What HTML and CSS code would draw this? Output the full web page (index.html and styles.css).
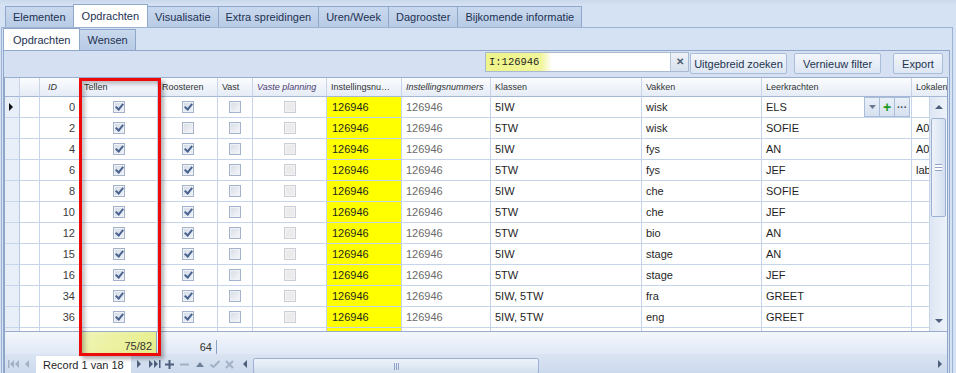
FILE: index.html
```html
<!DOCTYPE html>
<html lang="nl">

<head>
    <meta charset="UTF-8">
    <meta name="viewport" content="width=device-width, initial-scale=1.0">
    <title>Opdrachten</title>
    <link rel="stylesheet" href="styles.css">
</head>

<body>
    <!-- hoofdtabs -->
    <div class="tabs tabs-main">
        <div class="tab">Elementen</div>
        <div class="tab active">Opdrachten</div>
        <div class="tab">Visualisatie</div>
        <div class="tab">Extra spreidingen</div>
        <div class="tab">Uren/Week</div>
        <div class="tab">Dagrooster</div>
        <div class="tab">Bijkomende informatie</div>
    </div>

    <div class="tabpage">
        <!-- subtabs -->
        <div class="tabs tabs-sub">
            <div class="tab active">Opdrachten</div>
            <div class="tab">Wensen</div>
        </div>

        <div class="panel">
            <!-- zoekbalk -->
            <div class="toolbar">
                <div class="search">
                    <input type="text" value="I:126946">
                    <span class="clear">&#x2715;</span>
                </div>
                <button class="btn btn-wide">Uitgebreid zoeken</button>
                <button class="btn btn-filter">Vernieuw filter</button>
                <button class="btn btn-export">Export</button>
            </div>

            <!-- grid -->
            <div class="grid">
                <div class="head">
                    <div class="row row-head">
                        <div class="c ind"></div>
                        <div class="c"></div>
                        <div class="c it">ID</div>
                        <div class="c">Tellen</div>
                        <div class="c">Roosteren</div>
                        <div class="c">Vast</div>
                        <div class="c it purple">Vaste planning</div>
                        <div class="c">Instellingsnummer</div>
                        <div class="c it">Instellingsnummers</div>
                        <div class="c">Klassen</div>
                        <div class="c">Vakken</div>
                        <div class="c">Leerkrachten</div>
                        <div class="c">Lokalen</div>
                    </div>
                </div>

                <div class="body">
                    <div class="rows">
                        <div class="row">
                            <div class="c ind"><span class="cur"></span></div>
                            <div class="c"></div>
                            <div class="c num">0</div>
                            <div class="c mid"><span class="cb on"></span></div>
                            <div class="c mid"><span class="cb on"></span></div>
                            <div class="c mid"><span class="cb"></span></div>
                            <div class="c mid"><span class="cb off"></span></div>
                            <div class="c yel">126946</div>
                            <div class="c gray">126946</div>
                            <div class="c">5IW</div>
                            <div class="c">wisk</div>
                            <div class="c edit">ELS
                                <span class="ebtns">
                                    <span class="eb"><svg width="7" height="4" viewBox="0 0 7 4"><path d="M0 0H7L3.5 4Z" fill="#6b7a93"/></svg></span>
                                    <span class="eb plus">+</span>
                                    <span class="eb dots">&middot;&middot;&middot;</span>
                                </span>
                            </div>
                            <div class="c"></div>
                        </div>
                        <div class="row">
                            <div class="c ind"></div>
                            <div class="c"></div>
                            <div class="c num">2</div>
                            <div class="c mid"><span class="cb on"></span></div>
                            <div class="c mid"><span class="cb"></span></div>
                            <div class="c mid"><span class="cb"></span></div>
                            <div class="c mid"><span class="cb off"></span></div>
                            <div class="c yel">126946</div>
                            <div class="c gray">126946</div>
                            <div class="c">5TW</div>
                            <div class="c">wisk</div>
                            <div class="c">SOFIE</div>
                            <div class="c">A0</div>
                        </div>
                        <div class="row">
                            <div class="c ind"></div>
                            <div class="c"></div>
                            <div class="c num">4</div>
                            <div class="c mid"><span class="cb on"></span></div>
                            <div class="c mid"><span class="cb on"></span></div>
                            <div class="c mid"><span class="cb"></span></div>
                            <div class="c mid"><span class="cb off"></span></div>
                            <div class="c yel">126946</div>
                            <div class="c gray">126946</div>
                            <div class="c">5IW</div>
                            <div class="c">fys</div>
                            <div class="c">AN</div>
                            <div class="c">A0</div>
                        </div>
                        <div class="row">
                            <div class="c ind"></div>
                            <div class="c"></div>
                            <div class="c num">6</div>
                            <div class="c mid"><span class="cb on"></span></div>
                            <div class="c mid"><span class="cb on"></span></div>
                            <div class="c mid"><span class="cb"></span></div>
                            <div class="c mid"><span class="cb off"></span></div>
                            <div class="c yel">126946</div>
                            <div class="c gray">126946</div>
                            <div class="c">5TW</div>
                            <div class="c">fys</div>
                            <div class="c">JEF</div>
                            <div class="c">lab</div>
                        </div>
                        <div class="row">
                            <div class="c ind"></div>
                            <div class="c"></div>
                            <div class="c num">8</div>
                            <div class="c mid"><span class="cb on"></span></div>
                            <div class="c mid"><span class="cb on"></span></div>
                            <div class="c mid"><span class="cb"></span></div>
                            <div class="c mid"><span class="cb off"></span></div>
                            <div class="c yel">126946</div>
                            <div class="c gray">126946</div>
                            <div class="c">5IW</div>
                            <div class="c">che</div>
                            <div class="c">SOFIE</div>
                            <div class="c"></div>
                        </div>
                        <div class="row">
                            <div class="c ind"></div>
                            <div class="c"></div>
                            <div class="c num">10</div>
                            <div class="c mid"><span class="cb on"></span></div>
                            <div class="c mid"><span class="cb on"></span></div>
                            <div class="c mid"><span class="cb"></span></div>
                            <div class="c mid"><span class="cb off"></span></div>
                            <div class="c yel">126946</div>
                            <div class="c gray">126946</div>
                            <div class="c">5TW</div>
                            <div class="c">che</div>
                            <div class="c">JEF</div>
                            <div class="c"></div>
                        </div>
                        <div class="row">
                            <div class="c ind"></div>
                            <div class="c"></div>
                            <div class="c num">12</div>
                            <div class="c mid"><span class="cb on"></span></div>
                            <div class="c mid"><span class="cb on"></span></div>
                            <div class="c mid"><span class="cb"></span></div>
                            <div class="c mid"><span class="cb off"></span></div>
                            <div class="c yel">126946</div>
                            <div class="c gray">126946</div>
                            <div class="c">5TW</div>
                            <div class="c">bio</div>
                            <div class="c">AN</div>
                            <div class="c"></div>
                        </div>
                        <div class="row">
                            <div class="c ind"></div>
                            <div class="c"></div>
                            <div class="c num">15</div>
                            <div class="c mid"><span class="cb on"></span></div>
                            <div class="c mid"><span class="cb on"></span></div>
                            <div class="c mid"><span class="cb"></span></div>
                            <div class="c mid"><span class="cb off"></span></div>
                            <div class="c yel">126946</div>
                            <div class="c gray">126946</div>
                            <div class="c">5IW</div>
                            <div class="c">stage</div>
                            <div class="c">AN</div>
                            <div class="c"></div>
                        </div>
                        <div class="row">
                            <div class="c ind"></div>
                            <div class="c"></div>
                            <div class="c num">16</div>
                            <div class="c mid"><span class="cb on"></span></div>
                            <div class="c mid"><span class="cb on"></span></div>
                            <div class="c mid"><span class="cb"></span></div>
                            <div class="c mid"><span class="cb off"></span></div>
                            <div class="c yel">126946</div>
                            <div class="c gray">126946</div>
                            <div class="c">5TW</div>
                            <div class="c">stage</div>
                            <div class="c">JEF</div>
                            <div class="c"></div>
                        </div>
                        <div class="row">
                            <div class="c ind"></div>
                            <div class="c"></div>
                            <div class="c num">34</div>
                            <div class="c mid"><span class="cb on"></span></div>
                            <div class="c mid"><span class="cb on"></span></div>
                            <div class="c mid"><span class="cb"></span></div>
                            <div class="c mid"><span class="cb off"></span></div>
                            <div class="c yel">126946</div>
                            <div class="c gray">126946</div>
                            <div class="c">5IW, 5TW</div>
                            <div class="c">fra</div>
                            <div class="c">GREET</div>
                            <div class="c"></div>
                        </div>
                        <div class="row">
                            <div class="c ind"></div>
                            <div class="c"></div>
                            <div class="c num">36</div>
                            <div class="c mid"><span class="cb on"></span></div>
                            <div class="c mid"><span class="cb on"></span></div>
                            <div class="c mid"><span class="cb"></span></div>
                            <div class="c mid"><span class="cb off"></span></div>
                            <div class="c yel">126946</div>
                            <div class="c gray">126946</div>
                            <div class="c">5IW, 5TW</div>
                            <div class="c">eng</div>
                            <div class="c">GREET</div>
                            <div class="c"></div>
                        </div>
                        <div class="row">
                            <div class="c ind"></div>
                            <div class="c"></div>
                            <div class="c num">38</div>
                            <div class="c mid"><span class="cb on"></span></div>
                            <div class="c mid"><span class="cb on"></span></div>
                            <div class="c mid"><span class="cb"></span></div>
                            <div class="c mid"><span class="cb off"></span></div>
                            <div class="c yel">126946</div>
                            <div class="c gray">126946</div>
                            <div class="c">5IW, 5TW</div>
                            <div class="c">ned</div>
                            <div class="c">GREET</div>
                            <div class="c"></div>
                        </div>
                    </div>

                    <!-- verticale scrollbar -->
                    <div class="vscroll">
                        <div class="sb-btn"><svg width="8" height="4" viewBox="0 0 8 4"><path d="M0 4H8L4 0Z" fill="#4d5f7c"/></svg></div>
                        <div class="sb-thumb"><span class="grip-h"></span></div>
                        <div class="sb-track"></div>
                        <div class="sb-btn"><svg width="8" height="4" viewBox="0 0 8 4"><path d="M0 0H8L4 4Z" fill="#4d5f7c"/></svg></div>
                    </div>
                </div>

                <!-- totalen -->
                <div class="summary">
                    <div class="s-gap"></div>
                    <div class="s-cell s-tellen">75/82</div>
                    <div class="s-cell s-roost">64</div>
                </div>

                <!-- navigatie -->
                <div class="navbar">
                    <span class="nb first"><svg width="12" height="8" viewBox="0 0 12 8"><path d="M0 0H1.5V8H0Z M6 0L2 4L6 8Z M11 0L7 4L11 8Z" fill="#a3b1c6"/></svg></span>
                    <span class="nb prev"><svg width="4" height="8" viewBox="0 0 4 8"><path d="M4 0L0 4L4 8Z" fill="#a3b1c6"/></svg></span>
                    <span class="record">Record 1 van 18</span>
                    <span class="nb next"><svg width="4" height="8" viewBox="0 0 4 8"><path d="M0 0L4 4L0 8Z" fill="#4d5f7c"/></svg></span>
                    <span class="nb"><svg width="12" height="8" viewBox="0 0 12 8"><path d="M0 0L4 4L0 8Z M5 0L9 4L5 8Z M10 0H11.5V8H10Z" fill="#4d5f7c"/></svg></span>
                    <span class="nb"><svg width="9" height="9" viewBox="0 0 9 9"><path d="M3.5 0H5.5V3.5H9V5.5H5.5V9H3.5V5.5H0V3.5H3.5Z" fill="#4d5f7c"/></svg></span>
                    <span class="nb"><svg width="9" height="9" viewBox="0 0 9 9"><path d="M0 3.5H9V5.5H0Z" fill="#a3b1c6"/></svg></span>
                    <span class="nb"><svg width="8" height="5" viewBox="0 0 8 5"><path d="M0 5H8L4 0Z" fill="#6f7f98"/></svg></span>
                    <span class="nb"><svg width="10" height="8" viewBox="0 0 10 8"><path d="M0.5 4.5L3.5 7L9.5 1" fill="none" stroke="#a3b1c6" stroke-width="2"/></svg></span>
                    <span class="nb"><svg width="9" height="9" viewBox="0 0 9 9"><path d="M1 1L8 8M8 1L1 8" stroke="#a3b1c6" stroke-width="2"/></svg></span>
                    <div class="hscroll">
                        <span class="nb"><svg width="4" height="8" viewBox="0 0 4 8"><path d="M4 0L0 4L4 8Z" fill="#4d5f7c"/></svg></span>
                        <div class="hs-track">
                            <div class="hs-thumb"><span class="grip-v"></span></div>
                        </div>
                        <span class="nb"><svg width="4" height="8" viewBox="0 0 4 8"><path d="M0 0L4 4L0 8Z" fill="#4d5f7c"/></svg></span>
                    </div>
                </div>

                <!-- markering rond kolom Tellen -->
                <div class="mark"></div>
            </div>
        </div>
    </div>
</body>

</html>
```

FILE: styles.css
```css
/* algemene opmaak */
body {
    margin: 0;
    height: 373px;
    overflow: hidden;
    background: #d5e2f3;
    font-family: 'Liberation Sans', Arial, sans-serif;
    font-size: 11px;
    color: #1f1f1f;
}

/* tabs */
.tabs {
    display: flex;
    align-items: flex-end;
}

.tabs-main {
    height: 27px;
    padding-left: 5px;
    box-sizing: border-box;
    background: linear-gradient(#c9d8ec, #d5e2f3 5px);
}

.tab {
    height: 21px;
    line-height: 20px;
    padding: 0 7px;
    margin-right: -1px;
    border: 1px solid #8fa7ca;
    border-bottom: none;
    box-sizing: border-box;
    background: linear-gradient(#c9d9ee, #b8cbe5);
    color: #1d3152;
}

.tab.active {
    height: 23px;
    line-height: 22px;
    padding: 0 8px;
    background: #ffffff;
    position: relative;
    z-index: 1;
}

.tabpage {
    margin-left: 1px;
    width: 952px;
    border: 1px solid #9db2d2;
    border-bottom: none;
    box-sizing: border-box;
}

.tabs-sub {
    height: 22px;
    padding-left: 1px;
}

.tabs-sub .tab.active {
    height: 22px;
    padding: 0 9px;
}

/* paneel met zoekbalk en grid */
.panel {
    margin-left: 1px;
    width: 947px;
    border: 1px solid #8fa7ca;
    border-bottom: none;
    box-sizing: border-box;
    background: #d5e1f2;
}

.toolbar {
    height: 26px;
    display: flex;
    align-items: flex-start;
    justify-content: flex-end;
    padding-right: 6px;
}

.search {
    display: flex;
    margin-top: 1px;
    height: 20px;
    border: 1px solid #a9b9d0;
    box-sizing: border-box;
    background: #ffffff;
}

.search input {
    width: 184px;
    height: 18px;
    border: none;
    padding: 0 0 0 3px;
    box-sizing: border-box;
    font-family: 'Liberation Mono', 'Courier New', monospace;
    font-size: 10.5px;
    color: #1f1f1f;
    background: linear-gradient(to right, #eef48a, #f2f69a 55px, #ffffff 66px);
    outline: none;
}

.clear {
    width: 17px;
    line-height: 18px;
    text-align: center;
    font-size: 10px;
    font-weight: bold;
    color: #4e5b6e;
    background: linear-gradient(#eef2f8, #d7e0ee);
    border-left: 1px solid #b5c4da;
}

.btn {
    height: 21px;
    margin-top: 2px;
    padding: 0;
    border: 1px solid #a9bcd8;
    border-radius: 2px;
    background: linear-gradient(#f3f6fb, #dde6f3);
    font-family: 'Liberation Sans', Arial, sans-serif;
    font-size: 11px;
    color: #22344f;
}

.btn-wide {
    width: 97px;
    margin-left: 1px;
}

.btn-filter {
    width: 87px;
    margin-left: 7px;
}

.btn-export {
    width: 50px;
    margin-left: 12px;
}

/* grid */
.grid {
    position: relative;
    width: 942px;
    border-left: 1px solid #8ea5c8;
    border-right: 1px solid #8ea5c8;
    border-top: 1px solid #99aece;
    background: #ffffff;
}

.row {
    display: grid;
    grid-template-columns: 15px 20px 40px 78px 60px 35px 74px 75px 89px 151px 120px 150px 60px;
    height: 21px;
}

.c {
    display: flex;
    align-items: center;
    padding: 0 4px;
    border-right: 1px solid #c6d5ec;
    border-bottom: 1px solid #c6d5ec;
    box-sizing: border-box;
    white-space: nowrap;
    overflow: hidden;
    position: relative;
}

.head {
    overflow: hidden;
}

.row-head {
    height: 19px;
    background: linear-gradient(#fbfcfe, #e4ebf6);
}

.row-head .c {
    display: block;
    line-height: 18px;
    font-size: 9px;
    color: #333333;
    text-overflow: ellipsis;
    border-bottom-color: #a4b8d6;
    border-right-color: #c9d5e7;
}

.row-head .c:nth-child(3) {
    padding-left: 8px;
}

.it {
    font-style: italic;
}

.purple {
    color: #4b3a6e !important;
}

.body {
    display: flex;
    height: 234px;
}

.rows {
    flex: 1;
    overflow: hidden;
}

.ind {
    background: #e8eff9;
    border-right-color: #b8c9e2;
    padding: 0;
}

.cur {
    margin-left: 4px;
    border-left: 4px solid #111111;
    border-top: 4px solid transparent;
    border-bottom: 4px solid transparent;
}

.num {
    justify-content: flex-end;
    color: #3c3c3c;
}

.mid {
    justify-content: center;
}

.yel {
    background: #ffff00;
    padding-left: 5px;
}

.gray {
    color: #6a6a6a;
}

/* checkboxen */
.cb {
    width: 12px;
    height: 12px;
    box-sizing: border-box;
    border: 1px solid #a4b3ca;
    background: linear-gradient(135deg, #d6dce6, #f6f7f9);
    box-shadow: inset 0 0 0 1px #eef1f5;
    position: relative;
}

.cb.on {
    background: linear-gradient(135deg, #d3dbe7, #eef2f7);
}

.cb.on::after {
    content: "";
    position: absolute;
    left: 3px;
    top: 0;
    width: 3px;
    height: 6px;
    border: solid #4a6390;
    border-width: 0 2px 2px 0;
    transform: rotate(40deg);
}

.cb.off {
    border-color: #cbcfd5;
    background: #ebebeb;
    box-shadow: inset 0 0 0 1px #f3f3f3;
}

/* editor knoppen in cel leerkrachten */
.edit {
    justify-content: space-between;
    padding-right: 1px;
}

.ebtns {
    display: flex;
    height: 20px;
}

.eb {
    width: 16px;
    display: flex;
    align-items: center;
    justify-content: center;
    border: 1px solid #a9bcd8;
    margin-left: -1px;
    box-sizing: border-box;
    background: linear-gradient(#eaf0f8, #d6e0ef);
}

.plus {
    color: #1f9a1f;
    font-weight: bold;
    font-size: 14px;
}

.dots {
    color: #3c4a60;
    font-weight: bold;
    font-size: 10px;
}

/* verticale scrollbar */
.vscroll {
    width: 17px;
    display: flex;
    flex-direction: column;
    background: linear-gradient(to right, #dde6f3, #eef3fa);
    border-left: 1px solid #c6d4e9;
}

.sb-btn {
    height: 20px;
    display: flex;
    align-items: center;
    justify-content: center;
}

.sb-thumb {
    height: 97px;
    margin: 1px 1px 0;
    border: 1px solid #9db2d2;
    border-radius: 2px;
    background: linear-gradient(to right, #eef3fa, #d3dfef);
    display: flex;
    align-items: center;
    justify-content: center;
}

.grip-h {
    width: 7px;
    height: 5px;
    border-top: 1px solid #8ea3c3;
    border-bottom: 1px solid #8ea3c3;
    background: linear-gradient(#ffffff 2px, #8ea3c3 2px, #8ea3c3 3px, #ffffff 3px);
}

.sb-track {
    flex: 1;
}

/* totalen */
.summary {
    display: flex;
    height: 22px;
    border-top: 1px solid #97acce;
    background: linear-gradient(#f3f6fc, #e0e9f6);
}

.s-gap {
    width: 75px;
}

.s-cell {
    display: flex;
    align-items: center;
    justify-content: flex-end;
    box-sizing: border-box;
    padding-right: 4px;
    margin: 8px 0 0;
    height: 14px;
    border-right: 1px solid #8ea4c6;
    color: #333333;
    font-size: 11px;
}

.s-tellen {
    width: 77px;
    margin-right: 1px;
    margin-top: 0;
    height: 22px;
    padding-top: 6px;
    background: linear-gradient(135deg, #f0f4b8, #e6ee86);
    background-clip: padding-box;
    border-right: 1px solid #8ea4c6;
}

.s-roost {
    width: 59px;
    padding-top: 0;
}

/* navigatie */
.navbar {
    display: flex;
    align-items: center;
    height: 20px;
    background: linear-gradient(#dae4f2, #cbd9ed);
}

.nb {
    width: 15px;
    display: flex;
    justify-content: center;
    align-items: center;
}

.nb.first {
    width: 17px;
}

.nb.prev {
    width: 10px;
    margin-right: 4px;
}

.nb.next {
    width: 16px;
}

.record {
    align-self: flex-end;
    width: 95px;
    height: 18px;
    line-height: 18px;
    padding-left: 7px;
    box-sizing: border-box;
    background: #ffffff;
    color: #1f1f1f;
}

.hscroll {
    flex: 1;
    display: flex;
    align-items: center;
    height: 20px;
}

.hs-track {
    flex: 1;
    height: 20px;
    display: flex;
    align-items: flex-end;
    padding-left: 1px;
}

.hs-thumb {
    width: 286px;
    height: 16px;
    border: 1px solid #9db2d2;
    border-radius: 2px;
    box-sizing: border-box;
    background: linear-gradient(#eef3fa, #d3dfef);
    display: flex;
    justify-content: center;
    align-items: center;
}

.grip-v {
    width: 5px;
    height: 7px;
    background: repeating-linear-gradient(to right, #8ea3c3 0 1px, transparent 1px 2px);
}

/* rode markering */
.mark {
    position: absolute;
    left: 74px;
    top: 0;
    width: 82px;
    height: 278px;
    border: 3px solid #ee0a0a;
    box-sizing: border-box;
    box-shadow: 3px 3px 4px rgba(0, 0, 0, 0.3), inset 3px 3px 4px rgba(0, 0, 0, 0.25);
    pointer-events: none;
}
```
